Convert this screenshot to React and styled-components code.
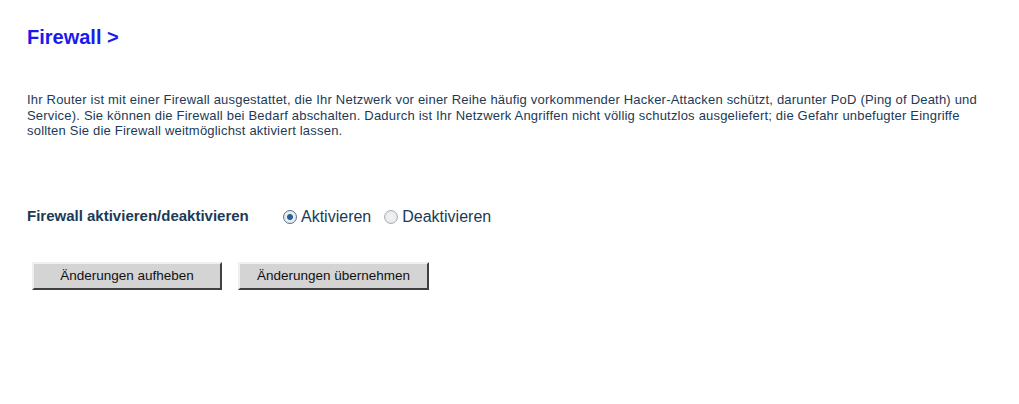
import React from 'react';
import styled, { createGlobalStyle } from 'styled-components';

const GlobalStyle = createGlobalStyle`
  body {
    margin: 0;
    background: #ffffff;
    font-family: "Liberation Sans", Arial, sans-serif;
  }
`;

const Page = styled.div`
  padding: 25px 27px 0 27px;
  width: 962px;
`;

const Title = styled.h1`
  margin: 0;
  font-size: 20px;
  font-weight: bold;
  color: #1a1af0;
  line-height: 24px;
`;

const Intro = styled.p`
  margin: 43px 0 0 0;
  font-size: 13px;
  letter-spacing: 0.2px;
  line-height: 15.5px;
  color: #1c3a56;
`;

const SettingRow = styled.div`
  display: flex;
  align-items: center;
  height: 20px;
  margin-top: 68px;
`;

const Label = styled.span`
  font-size: 15px;
  font-weight: bold;
  color: #1c3a56;
  width: 256px;
  margin-top: -3px;
`;

const RadioGroup = styled.div`
  display: flex;
  align-items: center;
  gap: 13px;
`;

const RadioLabel = styled.label`
  display: flex;
  align-items: center;
  gap: 4px;
  font-size: 16px;
  color: #1c3a56;
`;

const RadioDot = styled.span`
  width: 12px;
  height: 12px;
  border-radius: 50%;
  border: 1px solid ${(p) => (p.checked ? '#5d7488' : '#a8b0b8')};
  background: radial-gradient(circle, ${(p) => (p.checked ? '#2a5e94 0, #2a5e94 2.5px, #e9eef3 3.5px' : '#f4f4f4 0')}, #dfe4e8 100%);
  display: inline-block;
`;

const ButtonRow = styled.div`
  display: flex;
  gap: 16px;
  margin-top: 35px;
  padding-left: 5px;
`;

const Button = styled.button`
  width: ${(p) => p.w}px;
  height: 28px;
  background: #d4d4d4;
  border: 2px solid;
  border-color: #f0f0f0 #404040 #404040 #f0f0f0;
  font-family: "Liberation Sans", Arial, sans-serif;
  font-size: 13.5px;
  color: #111;
  padding: 0;
`;

export default function App() {
  return (
    <>
      <GlobalStyle />
      <Page>
        <Title>Firewall &gt;</Title>
        <Intro>
          Ihr Router ist mit einer Firewall ausgestattet, die Ihr Netzwerk vor einer Reihe häufig vorkommender Hacker-Attacken schützt, darunter PoD (Ping of Death) und Service). Sie können die Firewall bei Bedarf abschalten. Dadurch ist Ihr Netzwerk Angriffen nicht völlig schutzlos ausgeliefert; die Gefahr unbefugter Eingriffe sollten Sie die Firewall weitmöglichst aktiviert lassen.
        </Intro>
        <SettingRow>
          <Label>Firewall aktivieren/deaktivieren</Label>
          <RadioGroup>
            <RadioLabel><RadioDot checked />Aktivieren</RadioLabel>
            <RadioLabel><RadioDot />Deaktivieren</RadioLabel>
          </RadioGroup>
        </SettingRow>
        <ButtonRow>
          <Button w={190}>Änderungen aufheben</Button>
          <Button w={191}>Änderungen übernehmen</Button>
        </ButtonRow>
      </Page>
    </>
  );
}
